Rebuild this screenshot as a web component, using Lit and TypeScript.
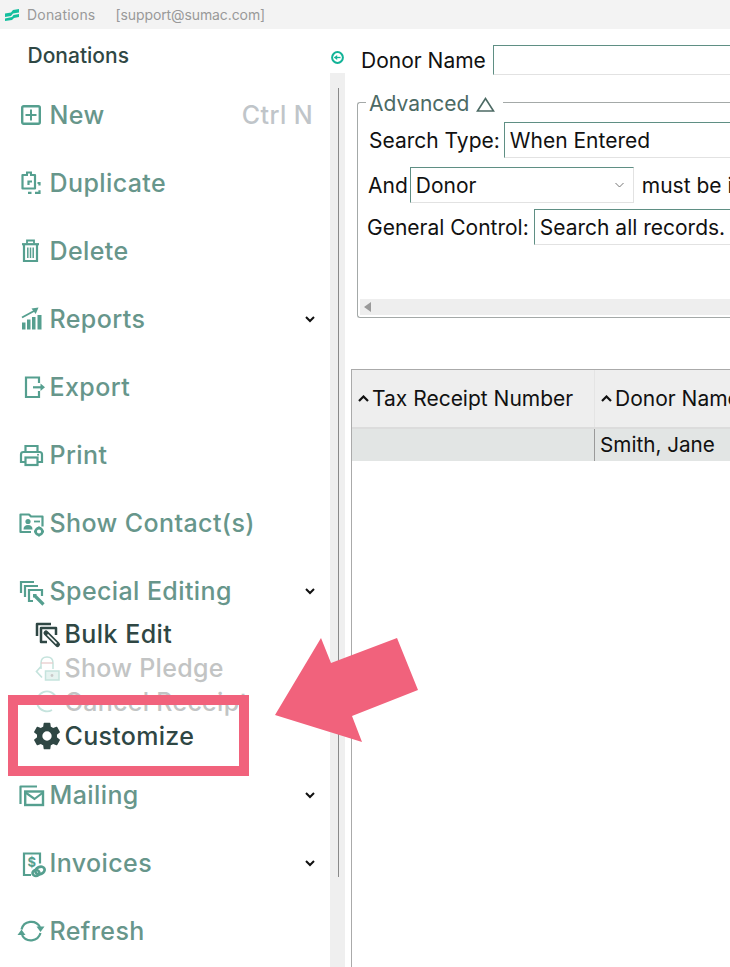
import { LitElement, html, css, svg } from "lit";
import { customElement } from "lit/decorators.js";

const S = (c: unknown, w = 24, h = 24) =>
  html`<svg class="ic" width=${w} height=${h} viewBox="0 0 ${w} ${h}" fill="none" stroke="currentColor" stroke-width="2.2">${c}</svg>`;

const icons: Record<string, unknown> = {
  new: S(svg`<rect x="3.200" y="3.200" width="17.600" height="17.600" rx="1.500" stroke-width="2.400"/><path d="M12 6.500v11M6.500 12h11" stroke-width="2"/>`),
  dup: S(svg`<path d="M7.500 4H3.500v13.500h12.500V4h-4" stroke-linejoin="round"/><path d="M8 5V1.500h4V5" stroke-width="2"/><path d="M9.500 14v-3.500h3.500" stroke-width="2.200"/><path d="M9 21.800h3.500M16 21.800h4.500v-2.500M20.500 14.500v-2.500h-2" stroke-width="2.200"/>`),
  del: S(svg`<path d="M3 5.200h17" stroke-width="2.200"/><path d="M8 4.500V1.500h7v3" stroke-width="1.800"/><path d="M5 6v16h13V6" stroke-width="2.200"/><path d="M8.800 8.500v10.500M11.500 8.500v10.500M14.200 8.500v10.500" stroke-width="1.500"/>`),
  rep: S(svg`<path d="M3 10.500L15 4" stroke-width="1.900"/><path d="M12.500 1.500l7-1-2.800 6.500z" fill="currentColor" stroke="none"/><path d="M3 15.500h3.500v7H3zM8 12.500h3.500v10H8zM13 10h3.500v12.500H13zM18.500 8h4v14.500h-4z" fill="currentColor" stroke="none"/>`),
  exp: S(svg`<path d="M20 8V2.500H7v19.500h13v-6"/><path d="M14 12.300h9" stroke-width="2.200"/><path d="M21.500 8.500l4.500 3.800-4.500 3.800z" fill="currentColor" stroke="none"/>`),
  print: S(svg`<path d="M6.500 9V3h12v6"/><path d="M6.500 19H2v-7.500q0-2.500 2.500-2.500h16q2.500 0 2.500 2.500V19h-4.500"/><rect x="6.500" y="14.500" width="12" height="7.500"/><circle cx="19" cy="11.800" r="1" fill="currentColor" stroke="none"/>`),
  contact: S(svg`<path d="M13 22H2.500V4.500h8.500l2 2h11.500v10" stroke-linejoin="round"/><circle cx="10" cy="11.500" r="2.600" fill="currentColor" stroke="none"/><path d="M5.500 19.500q0-4.500 4.500-4.500t4.500 4.500z" fill="currentColor" stroke="none"/><path d="M16 11.500h6" stroke-width="1.800"/><circle cx="21" cy="21.500" r="3.400" stroke-width="2.600"/><path d="M21 16.500v1.500M21 25v1.500M16 21.500h1.500M24.500 21.500H26" stroke-width="1.800"/>`, 26, 26),
  special: S(svg`<path d="M3 15V4h13" /><path d="M7 19V8h13"/><path d="M15 23h-4V12h13v6"/><path d="M16.500 17.500l9 9" stroke-width="3.200"/><path d="M15 16h4l-4 4z" fill="currentColor" stroke="none"/>`, 26, 26),
  bulk: S(svg`<path d="M2 14V2h14" stroke-width="2.500" stroke-linejoin="round"/><path d="M12 20H6V6h15v7" stroke-width="2.500" stroke-linejoin="round"/><path d="M11 11l11.500 11.500" stroke-width="5" stroke-linecap="round"/><path d="M12.500 12.500l9 9" stroke="#fff" stroke-width="1.600"/>`, 25, 25),
  pledge: S(svg`<path d="M6 13V7Q6 1 12 1t6 6v6" stroke-width="1.500"/><path d="M6 7h12" stroke="#e6c9c9" stroke-width="1.200"/><path d="M6 10.500L1.500 15.500 7 21.500" stroke-width="1.700"/><rect x="10.500" y="15" width="13.500" height="9" fill="#e6f3f0" stroke-width="1.500"/><circle cx="17" cy="19.500" r="1.400" fill="#c9c9c9" stroke="none"/>`, 25, 25),
  cancel: S(svg`<path d="M21.500 8.500A10 10 0 1 0 17 20" stroke-width="1.800"/>`, 25, 25),
  gear: html`<svg class="ic gear" width="32" height="32" viewBox="0 0 24 24" fill="currentColor"><path fill-rule="evenodd" d="M19.430 12.980c.04-.32.070-.64.070-.98s-.03-.66-.07-.98l2.110-1.650c.19-.15.240-.42.120-.64l-2-3.460c-.12-.22-.39-.3-.61-.22l-2.490 1c-.52-.4-1.080-.73-1.690-.98l-.38-2.650A.49.49 0 0 0 14 2h-4c-.25 0-.46.18-.49.420l-.38 2.650c-.61.250-1.170.59-1.690.98l-2.490-1a.49.49 0 0 0-.61.220l-2 3.460c-.13.220-.07.490.12.640l2.110 1.650c-.04.320-.07.650-.07.980s.03.660.07.980l-2.110 1.650c-.19.150-.24.420-.12.640l2 3.460c.12.220.39.300.61.220l2.490-1c.52.400 1.080.730 1.690.980l.38 2.650c.03.240.24.420.49.420h4c.25 0 .46-.18.49-.42l.38-2.650c.61-.25 1.170-.59 1.690-.98l2.490 1c.23.090.49 0 .61-.22l2-3.460c.12-.22.070-.49-.12-.64l-2.110-1.650zM12 15.500a3.500 3.500 0 1 1 0-7 3.500 3.500 0 0 1 0 7z"/></svg>`,
  mail: S(svg`<path d="M2.500 22V4.500H19" stroke-linejoin="round"/><rect x="7.200" y="9.500" width="17.800" height="13.500" stroke-width="2.400"/><path d="M7.500 10.500l9 6.500 8.500-6.500" stroke-width="2.200"/>`, 26, 26),
  inv: S(svg`<path d="M13 25H6V3.500h16v10"/><text x="9.500" y="17" font-size="13" font-weight="700" font-family="Inter" fill="currentColor" stroke="none">$</text><ellipse cx="22" cy="20.500" rx="4.800" ry="3.600" stroke-width="2.800" transform="rotate(-25 22 20.500)"/><ellipse cx="18" cy="23" rx="3.500" ry="3" stroke-width="2.600"/>`, 26, 26),
  refresh: html`<svg class="ic" width="28" height="28" viewBox="0 0 28 28" fill="none" stroke="currentColor" stroke-width="2.200"><path d="M4.500 12.500A10 10 0 0 1 23 10"/><path d="M23.500 16A10 10 0 0 1 5 18"/><path d="M19.500 9.500h8L23.500 15z" fill="currentColor" stroke="none"/><path d="M.5 18h8L4.500 12.500z" fill="currentColor" stroke="none"/></svg>`,
};

const chev = html`<svg class="chev" width="10" height="7" viewBox="0 0 10 7" fill="none" stroke="#111" stroke-width="2"><path d="M1 1l4 4 4-4"/></svg>`;
const caret = html`<svg class="caret" width="11" height="7" viewBox="0 0 11 7" fill="none" stroke="#111" stroke-width="2.200"><path d="M1 6l4.500-4.500L10 6"/></svg>`;

@customElement("app-root")
export class AppRoot extends LitElement {
  static styles = css`
    :host { display: block; width: 730px; height: 967px; overflow: hidden; position: relative; background: #fff; font-family: Inter, "Noto Sans", sans-serif; color: #111; }
    .title { height: 29px; background: #f3f3f3; display: flex; align-items: center; padding-left: 5px; font-size: 14px; color: #999; }
    .title svg { margin-right: 8px; }
    .title .app { letter-spacing: .2px; }
    .title .who { margin-left: 20px; letter-spacing: -.1px; }
    .main { display: flex; height: 938px; }
    .side { width: 330px; flex: none; }
    .side h1 { margin: 0; height: 52px; display: flex; align-items: center; padding-left: 27.500px; font-size: 21px; font-weight: 500; color: #2f4744; }
    .item { height: 68px; display: flex; align-items: center; padding: 0 13px 0 16px; font-size: 25px; font-weight: 500; letter-spacing: .4px; color: #67968b; white-space: nowrap; }
    .box { width: 30px; margin-right: 3.500px; display: flex; justify-content: center; flex: none; color: #559f8f; }
    .ic { display: block; flex: none; overflow: visible; }
    .gear { margin: 0 -1px; }
    .item .end { margin-left: auto; margin-right: 4px; color: #c0c5c9; letter-spacing: .4px; }
    .chev { margin-left: auto; margin-right: 2px; }
    .subs { margin: -8px 0 8px; }
    .sub { height: 34px; display: flex; align-items: center; padding-left: 32px; font-size: 25px; font-weight: 500; letter-spacing: .3px; color: #2f4744; white-space: nowrap; }
    .sub .box { color: inherit; margin-right: 2.500px; }
    .sub.bulk { letter-spacing: .45px; }
    .sub.off { color: #c2c4c4; }
    .sub.off .box { color: #c5e3dd; }
    .sub.top { position: relative; background: #fff; margin-right: 90px; }
    .split { width: 15px; flex: none; display: flex; flex-direction: column; }
    .handle { margin: 19px 0 0 1px; height: 25px; flex: none; color: #12b397; }
    .bar { flex: 1; background: #efefef; padding: 15px 0 90px 7.500px; display: flex; }
    .bar i { width: 1.500px; background: #8a8a8a; display: block; }
    .right { flex: 1; min-width: 0; overflow: hidden; padding-top: 16px; font-size: 21px; }
    .donor { display: flex; align-items: center; height: 30px; padding-left: 16px; white-space: nowrap; }
    .field { flex: none; background: #fff; border: 1px solid #e2e2e2; border-left: 1.500px solid #5f8f84; border-top: 1.500px solid #5f8f84; border-right: 0; box-sizing: border-box; padding-left: 5px; display: flex; align-items: center; white-space: nowrap; }
    .donor .field { margin-left: 7px; width: 300px; height: 30px; }
    fieldset { margin: 14px 0 0 12px; padding: 0; width: 480px; height: 228.500px; box-sizing: border-box; border: 1.500px solid #a4a9a8; border-right: 0; border-radius: 3px 0 0 3px; position: relative; }
    legend { margin-left: 8px; padding: 3px 8px 0 3px; font-size: 21px; line-height: 24px; color: #4c6a64; display: flex; align-items: center; gap: 7px; }
    .rows { display: flex; flex-direction: column; padding: 6px 0 0 11px; }
    .row { display: flex; align-items: center; height: 36px; white-space: nowrap; }
    .row .field { height: 36px; width: 340px; margin-left: 4px; }
    .r1 { margin-bottom: 9px; }
    .r2 { margin-bottom: 6px; margin-left: -1px; }
    .r3 { margin-left: -2px; }
    .row .sel { width: 224px; margin-left: 2px; border-right: 1px solid #e2e2e2; justify-content: space-between; padding-right: 9px; margin-right: 8px; }
    .r3 .field { margin-left: 5px; }
    .scroll { position: absolute; left: 2px; right: 0; bottom: 2px; height: 16px; background: #eee; display: flex; align-items: center; padding-left: 4px; }
    .tbl { margin: 51px 0 0 6px; height: 640px; border: 1.500px solid #aaa; border-right: 0; box-sizing: border-box; width: 400px; font-size: 21px; }
    .thead { display: flex; height: 57px; background: #eeeeee; border-bottom: 2px solid #dcdcdc; white-space: nowrap; }
    .th { display: flex; align-items: center; gap: 3px; padding-left: 6px; }
    .c1 { width: 243px; flex: none; box-sizing: border-box; border-right: 1px solid #e4e4e4; }
    .tr { display: flex; height: 32px; background: #e2e5e4; white-space: nowrap; font-size: 20.700px; }
    .tr .c1 { border-right: 1.500px solid #9a9a9a; }
    .td { padding-left: 5px; display: flex; align-items: center; }
    .hl { position: absolute; left: 8px; top: 695px; width: 241px; height: 81px; box-sizing: border-box; border: 10px solid #f1627c; }
    .arrow { position: absolute; left: 270px; top: 632px; }
  `;

  private item(ic: string, label: string, more?: unknown) {
    return html`<div class="item"><span class="box">${icons[ic]}</span>${label}${more ?? ""}</div>`;
  }

  private sub(ic: string, label: string, cls = "") {
    return html`<div class="sub ${cls}"><span class="box">${icons[ic]}</span>${label}</div>`;
  }

  render() {
    return html`
      <div class="title">
        <svg width="14" height="12" viewBox="0 0 14 12" fill="#14bf9e"><path d="M0 4.500L6 3.500 8 1 14 0v3.500L8 4.500 6 7 0 8zM0 9.500L7 8 8.500 6 14 5v3l-5 1-2 2-7 1z"/></svg>
        <span class="app">Donations</span><span class="who">[support@sumac.com]</span>
      </div>
      <div class="main">
        <div class="side">
          <h1>Donations</h1>
          ${this.item("new", "New", html`<span class="end">Ctrl N</span>`)}
          ${this.item("dup", "Duplicate")}
          ${this.item("del", "Delete")}
          ${this.item("rep", "Reports", chev)}
          ${this.item("exp", "Export")}
          ${this.item("print", "Print")}
          ${this.item("contact", "Show Contact(s)")}
          ${this.item("special", "Special Editing", chev)}
          <div class="subs">
            ${this.sub("bulk", "Bulk Edit", "bulk")}
            ${this.sub("pledge", "Show Pledge", "off")}
            ${this.sub("cancel", "Cancel Receipt", "off")}
            ${this.sub("gear", "Customize", "top")}
          </div>
          ${this.item("mail", "Mailing", chev)}
          ${this.item("inv", "Invoices", chev)}
          ${this.item("refresh", "Refresh")}
        </div>
        <div class="split">
          <div class="handle">
            <svg width="13" height="13" viewBox="0 0 13 13" fill="none" stroke="currentColor"><circle cx="6.500" cy="6.500" r="5.400" stroke-width="2"/><path d="M3.500 6.500h6" stroke-width="1.300"/><path d="M6.200 4v5L3 6.500z" fill="currentColor" stroke="none"/></svg>
          </div>
          <div class="bar"><i></i></div>
        </div>
        <div class="right">
          <div class="donor">Donor Name<div class="field"></div></div>
          <fieldset>
            <legend>Advanced
              <svg width="19" height="15" viewBox="0 0 19 15" fill="none" stroke="#4c6a64" stroke-width="1.600"><path d="M9.500 1.500L1.500 14h16z"/></svg>
            </legend>
            <div class="rows">
              <div class="row r1">Search Type:<div class="field">When Entered</div></div>
              <div class="row r2">And<div class="field sel">Donor
                <svg width="9" height="6" viewBox="0 0 9 6" fill="none" stroke="#777" stroke-width="1"><path d="M.5 1l4 4 4-4"/></svg>
              </div>must be i</div>
              <div class="row r3">General Control:<div class="field">Search all records.</div></div>
            </div>
            <div class="scroll">
              <svg width="7" height="10" viewBox="0 0 7 10" fill="#9a9a9a"><path d="M7 0v10L0 5z"/></svg>
            </div>
          </fieldset>
          <div class="tbl">
            <div class="thead">
              <div class="th c1">${caret}Tax Receipt Number</div>
              <div class="th">${caret}Donor Name</div>
            </div>
            <div class="tr"><div class="td c1"></div><div class="td">Smith, Jane</div></div>
          </div>
        </div>
      </div>
      <div class="hl"></div>
      <svg class="arrow" width="152" height="114" viewBox="270 632 152 114" fill="#f1627c"><path d="M275 715L321 638 331 663 397 638 418 690 352 716 362 742z"/></svg>
    `;
  }
}
